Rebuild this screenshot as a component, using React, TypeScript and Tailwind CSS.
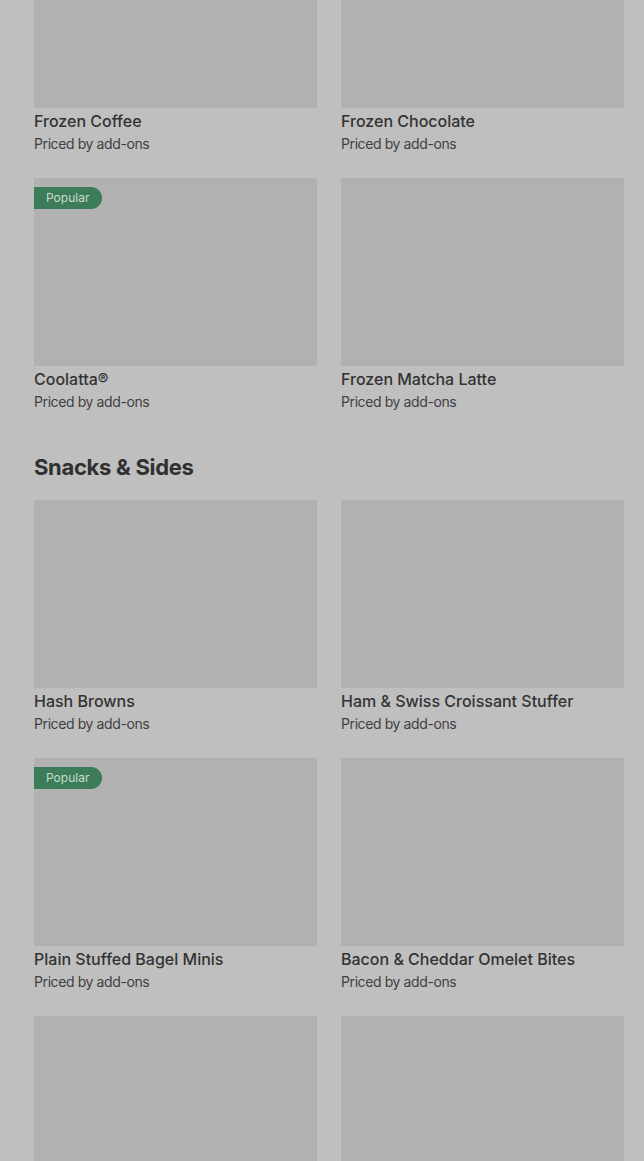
import React from 'react';

interface Item {
  name: string;
  popular?: boolean;
}

const drinks: Item[] = [
  { name: 'Frozen Coffee' },
  { name: 'Frozen Chocolate' },
  { name: 'Coolatta®', popular: true },
  { name: 'Frozen Matcha Latte' },
];

const snacks: Item[] = [
  { name: 'Hash Browns' },
  { name: 'Ham & Swiss Croissant Stuffer' },
  { name: 'Plain Stuffed Bagel Minis', popular: true },
  { name: 'Bacon & Cheddar Omelet Bites' },
  { name: '' },
  { name: '' },
];

const ItemCard: React.FC<{ item: Item }> = ({ item }) => (
  <div className="flex flex-col">
    <div className="relative h-[188px] bg-[#b1b1b1]">
      {item.popular && (
        <span className="absolute left-0 top-[9px] h-[22px] w-[68px] flex items-center pl-3 rounded-r-full bg-[#3c7c59] text-[12px] text-[#c9dccf]">
          Popular
        </span>
      )}
    </div>
    {item.name && (
      <div className="pt-[3px] h-[46px]">
        <p className="text-[16px] leading-[20px] font-medium text-[#333333]">{item.name}</p>
        <p className="text-[14px] leading-[20px] mt-[3px] tracking-[-0.4px] text-[#3f3f3f]">Priced by add-ons</p>
      </div>
    )}
  </div>
);

export default function App() {
  return (
    <div
      className="w-[644px] h-[1161px] overflow-hidden bg-[#bfbfbf]"
      style={{ fontFamily: 'Inter, "Noto Sans", sans-serif' }}
    >
      <div className="pl-[34px] pr-[20px] -mt-[80px]">
        <div className="grid grid-cols-2 gap-x-[24px] gap-y-[24px]">
          {drinks.map((it, i) => (
            <ItemCard key={i} item={it} />
          ))}
        </div>

        <h2 className="mt-[43px] mb-[20px] text-[22px] leading-[25px] font-bold tracking-[-0.3px] text-[#303030]">
          Snacks &amp; Sides
        </h2>

        <div className="grid grid-cols-2 gap-x-[24px] gap-y-[24px]">
          {snacks.map((it, i) => (
            <ItemCard key={i} item={it} />
          ))}
        </div>
      </div>
    </div>
  );
}
